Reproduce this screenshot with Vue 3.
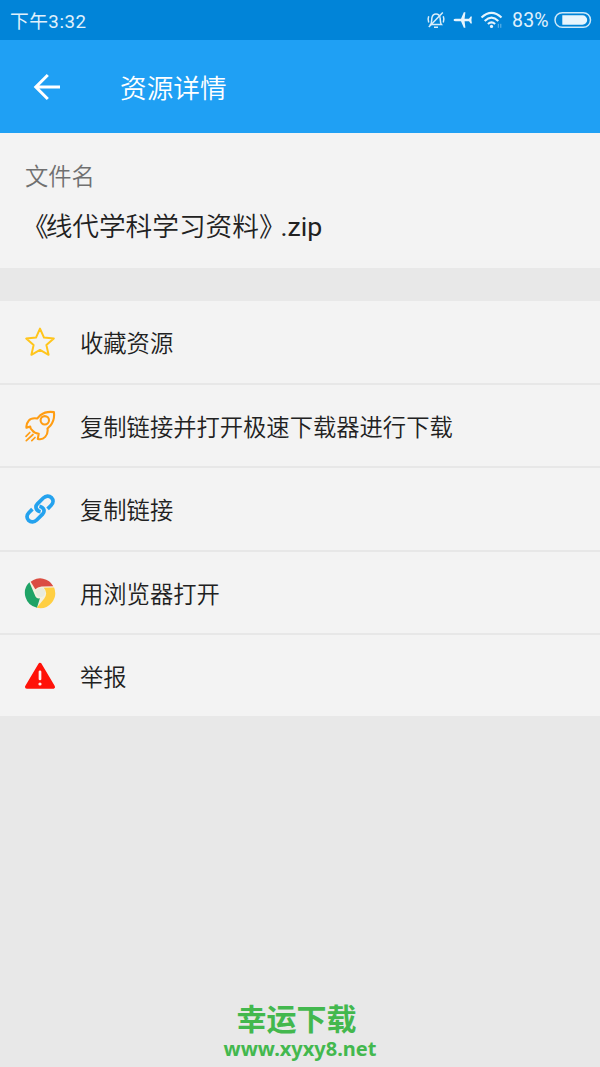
<script setup>
const items = [
  { icon: 'star', label: '收藏资源' },
  { icon: 'rocket', label: '复制链接并打开极速下载器进行下载' },
  { icon: 'link', label: '复制链接' },
  { icon: 'chrome', label: '用浏览器打开' },
  { icon: 'warning', label: '举报' },
]
</script>

<template>
  <div class="screen">
    <div class="status">
      <span class="time">下午3:32</span>
      <div class="indicators">
        <svg class="bell" width="20" height="20" viewBox="0 0 20 20" fill="none" stroke="#d9edfa" stroke-width="1.5">
          <path d="M4.6 14.6C6 13 5.4 10 6 7.4C6.6 4.6 8 3.900 10 3.900S13.5 4.600 14 7.400C14.600 10 14 13 15.400 14.600Z" />
          <path d="M8 17.300h4M2.700 6.200Q1.400 9.300 2.700 12.500M17.300 6.200Q18.600 9.300 17.300 12.500" />
          <path d="M16.800 2.400L2.800 17" />
        </svg>
        <svg class="plane" width="20" height="20" viewBox="0 0 20 20" fill="#e6f4fd">
          <path d="M.5 10Q.7 8.800 2.700 8.800H8L10.800 2.200H12.400L11.600 8.800H16L17.600 6.400H18.900L18.400 10L18.900 13.600H17.600L16 11.200H11.600L12.400 17.800H10.800L8 11.200H2.700Q.7 11.200 .5 10Z" />
        </svg>
        <svg class="wifi" width="24" height="20" viewBox="0 0 24 20" fill="none" stroke="#e6f4fd" stroke-width="2.100">
          <path d="M1.500 7.600Q11.500-1.800 21.500 7.600M4.700 10.900Q11.500 4.500 18.300 10.900M7.900 14Q11.500 10.700 15.100 14" />
          <circle cx="11.500" cy="16.400" r="1.600" fill="#e6f4fd" stroke="none" />
          <path d="M18.300 13.800v4M20.800 13.800v4" stroke-width=".8" opacity=".6" />
        </svg>
        <span class="percent">83%</span>
        <svg class="battery" width="38" height="18" viewBox="0 0 38 18">
          <rect x="1" y="1.700" width="35.500" height="14.600" rx="7.300" fill="none" stroke="#cce8f9" stroke-width="1.500" />
          <path d="M8.300 4.300H28.500A4.700 4.700 0 0 1 28.500 13.700H8.300Z" fill="#e8f5fd" />
        </svg>
      </div>
    </div>

    <header class="bar">
      <svg class="back" width="30" height="30" viewBox="0 0 30 30" fill="none" stroke="#fff" stroke-width="3">
        <path d="M15.800 3L3.800 15L15.800 27M3.500 15H28" />
      </svg>
      <h1>资源详情</h1>
    </header>

    <section class="file">
      <div class="caption">文件名</div>
      <div class="name"><span class="open">《</span>线代学科学习资料<span class="close">》</span><span class="ext">.zip</span></div>
    </section>

    <main class="list">
      <div v-for="item in items" :key="item.label" class="row">
        <svg class="icon" width="32" height="32" viewBox="0 0 32 32">
          <path v-if="item.icon === 'star'" d="M16 2.600L20 11.600L29.800 12.600L22.400 19.100L24.600 28.800L16 23.900L7.400 28.800L9.600 19.100L2.200 12.600L12 11.600Z" fill="none" stroke="#ffc51c" stroke-width="2" stroke-linejoin="round" />
          <g v-else-if="item.icon === 'rocket'" fill="none" stroke="#ff9d13" stroke-width="2.100" stroke-linecap="round" stroke-linejoin="round">
            <path d="M29.900 2.100Q22 .9 16.500 5.100L13.200 8.500Q7.200 7.600 4.700 10.700Q1.900 14 2.500 17.800L6.200 16.600Q6.300 18.900 8.300 20.400Q10.200 23.100 14.700 23.900L13.800 28.900Q18.300 30 21.200 26.900Q24.300 23.700 23.500 18.500L26.500 15.500Q31 9.900 29.900 2.100Z" />
            <circle cx="20.800" cy="10.300" r="4.200" />
            <path d="M5.800 22.500L2 26.400M9 24.500L2.300 30.600M11 27.500L7.800 30.700" stroke-width="1.700" />
          </g>
          <g v-else-if="item.icon === 'link'" fill="none" stroke="#24a2ee" stroke-width="3.700">
            <path d="M16.600 18.700C11.600 17.600 10.900 13.400 13.400 10.900L19.300 5C21.800 2.500 25.200 2.400 27.400 4.600S29.500 10 27.200 12.300L23.600 15.900" />
            <path d="M15.400 13.300C20.400 14.400 21.100 18.600 18.600 21.100L12.700 27C10.200 29.500 6.800 29.600 4.600 27.400S2.500 22 4.800 19.700L8.400 16.100" />
          </g>
          <g v-else-if="item.icon === 'chrome'">
            <circle cx="16" cy="16" r="14.600" fill="#f4f1df" />
            <path d="M6.700 4.700A14.900 14.900 0 0 1 29.300 9.300L17.500 9.600Q13.500 10 11.300 12.300Z" fill="#db4d43" />
            <path d="M5.400 5.300A15 15 0 0 0 13 30.700L15.900 21.300Q12.900 22 11.500 19.500Z" fill="#1fa366" />
            <path d="M19.700 10.800L30.100 10.600A15 15 0 0 1 12.700 30.700L20.300 21.500Q24.300 15.500 19.700 10.800Z" fill="#ffcf42" />
            <circle cx="16.600" cy="15.600" r="4.600" fill="#e8ebdd" />
          </g>
          <g v-else>
            <path d="M16 4.600L29.200 27H2.800Z" fill="#ff1209" stroke="#ff1209" stroke-width="3.600" stroke-linejoin="round" />
            <path d="M16 11.800V19" stroke="#fff0ef" stroke-width="2.700" stroke-linecap="round" />
            <circle cx="16" cy="24" r="1.600" fill="#fff0ef" />
          </g>
        </svg>
        <span class="label">{{ item.label }}</span>
      </div>
    </main>

    <footer class="mark">
      <div class="brand">幸运下载</div>
      <div class="site">www.xyxy8.net</div>
    </footer>
  </div>
</template>

<style>
body {
  margin: 0;
  background: #e8e8e8;
}
</style>

<style scoped>
.screen {
  display: flex;
  flex-direction: column;
  width: 600px;
  height: 1067px;
  overflow: hidden;
  background: #e8e8e8;
  font-family: Roboto, "Noto Sans CJK SC", sans-serif;
  white-space: nowrap;
}
.status {
  display: flex;
  flex: none;
  align-items: center;
  justify-content: space-between;
  box-sizing: border-box;
  height: 40px;
  padding: 0 8px 0 10px;
  background: #0184d8;
  color: #e0f1fc;
}
.time {
  padding-top: 3px;
  font-size: 18.7px;
  letter-spacing: .5px;
  line-height: 40px;
}
.indicators {
  display: flex;
  align-items: center;
}
.bell {
  margin-right: 1px;
}
.plane {
  margin-left: 6px;
}
.wifi {
  margin-left: 7px;
}
.percent {
  width: 38px;
  margin: 0 4px 0 8px;
  padding-top: 2px;
  font-size: 19.5px;
  letter-spacing: .2px;
  line-height: 40px;
}
.bar {
  display: flex;
  flex: none;
  align-items: center;
  box-sizing: border-box;
  height: 93.3px;
  padding-left: 32px;
  background: #1fa0f4;
  color: #fff;
}
h1 {
  margin: 0 0 0 58px;
  padding-top: 4px;
  font-size: 26.67px;
  font-weight: 350;
  line-height: 40px;
}
.file {
  flex: none;
  box-sizing: border-box;
  height: 134.5px;
  padding: 26px 25px 0;
  background: #f3f3f3;
}
.caption {
  color: #707070;
  font-size: 23.3px;
  font-weight: 350;
  line-height: 36px;
}
.name {
  margin: 12px 0 0 -6px;
  color: #212121;
  font-size: 26.67px;
  font-weight: 350;
  line-height: 40px;
}
.open {
  margin-left: 3px;
  letter-spacing: -3px;
}
.close {
  letter-spacing: -5px;
}
.ext {
  font-weight: 400;
}
.list {
  flex: none;
  margin-top: 33px;
}
.row {
  display: flex;
  align-items: center;
  box-sizing: border-box;
  height: 83.33px;
  padding: 1px 0 0 24px;
  border-bottom: 2px solid #e7e7e7;
  background: #f3f3f3;
}
.row:first-child {
  height: 84.2px;
}
.row:last-child {
  height: 81.2px;
  border-bottom: 0;
}
.label {
  margin-left: 24px;
  padding-top: 4px;
  color: #212121;
  font-size: 23.3px;
  font-weight: 350;
  line-height: 36px;
}
.mark {
  margin-top: auto;
  padding-bottom: 6px;
  color: #43b84e;
  font-weight: 700;
  text-align: center;
}
.brand {
  padding-right: 7px;
  font-size: 30px;
  line-height: 32px;
}
.site {
  font-family: "Noto Sans", sans-serif;
  font-size: 20px;
  line-height: 25px;
}
</style>
